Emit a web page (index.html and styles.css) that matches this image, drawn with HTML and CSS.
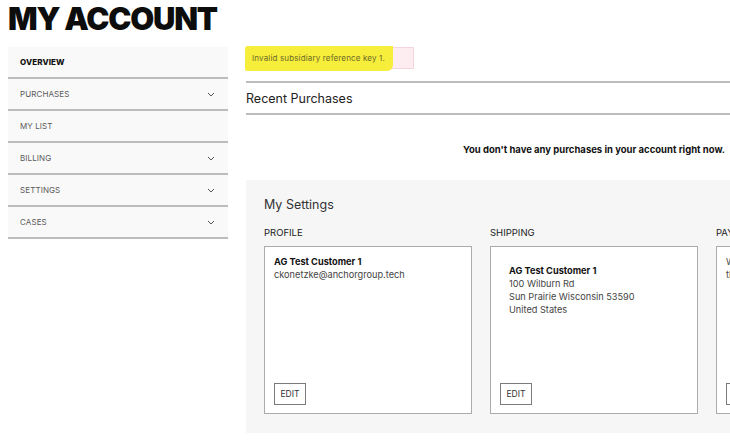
FILE: index.html
```html
<!DOCTYPE html>
<html lang="en">
<head>
    <meta charset="UTF-8">
    <meta name="viewport" content="width=device-width, initial-scale=1.0">
    <title>My Account</title>
    <link rel="stylesheet" href="styles.css">
</head>
<body>

<div class="account-page">
    <h1>My Account</h1>

    <div class="account-layout">
        <!-- Sidebar navigation -->
        <ul class="side-nav">
            <li class="nav-item active"><span>Overview</span></li>
            <li class="nav-item"><span>Purchases</span>
                <svg class="chevron" width="8" height="5" viewBox="0 0 8 5"><polyline points="1,1 4,4 7,1"/></svg>
            </li>
            <li class="nav-item"><span>My List</span></li>
            <li class="nav-item"><span>Billing</span>
                <svg class="chevron" width="8" height="5" viewBox="0 0 8 5"><polyline points="1,1 4,4 7,1"/></svg>
            </li>
            <li class="nav-item"><span>Settings</span>
                <svg class="chevron" width="8" height="5" viewBox="0 0 8 5"><polyline points="1,1 4,4 7,1"/></svg>
            </li>
            <li class="nav-item"><span>Cases</span>
                <svg class="chevron" width="8" height="5" viewBox="0 0 8 5"><polyline points="1,1 4,4 7,1"/></svg>
            </li>
        </ul>

        <div class="account-main">
            <div class="alert-error"><span class="marker">Invalid subsidiary reference key 1.</span></div>

            <div class="recent-purchases">
                <h2>Recent Purchases</h2>
            </div>
            <p class="empty-message">You don't have any purchases in your account right now.</p>

            <!-- Settings overview -->
            <div class="settings-panel">
                <h2>My Settings</h2>
                <div class="settings-grid">
                    <div class="settings-col">
                        <h3>Profile</h3>
                        <div class="settings-card">
                            <p><strong>AG Test Customer 1</strong></p>
                            <p>ckonetzke@anchorgroup.tech</p>
                            <button class="edit-btn">EDIT</button>
                        </div>
                    </div>
                    <div class="settings-col">
                        <h3>Shipping</h3>
                        <div class="settings-card address">
                            <p><strong>AG Test Customer 1</strong></p>
                            <p>100 Wilburn Rd</p>
                            <p>Sun Prairie Wisconsin 53590</p>
                            <p>United States</p>
                            <button class="edit-btn">EDIT</button>
                        </div>
                    </div>
                    <div class="settings-col">
                        <h3>Payment</h3>
                        <div class="settings-card">
                            <p>We don't have any credit cards on file for</p>
                            <p>this account.</p>
                            <button class="edit-btn">EDIT</button>
                        </div>
                    </div>
                </div>
            </div>
        </div>
    </div>
</div>

</body>
</html>
```

FILE: styles.css
```css
* {
    margin: 0;
    padding: 0;
    box-sizing: border-box;
}
body {
    font-family: 'Inter', 'Liberation Sans', sans-serif;
    background-color: #fff;
    color: #222;
    overflow: hidden;
    width: 730px;
    height: 440px;
}
.account-page {
    padding-left: 8px;
}
h1 {
    font-size: 31px;
    font-weight: 900;
    text-transform: uppercase;
    line-height: 36px;
    letter-spacing: -1.2px;
    color: #0d0d0d;
    padding-top: 1px;
    margin-bottom: 10px;
}
.account-layout {
    display: flex;
    gap: 18px;
    align-items: flex-start;
}

/* sidebar */
.side-nav {
    list-style: none;
    width: 220px;
    flex-shrink: 0;
}
.nav-item {
    display: flex;
    align-items: center;
    justify-content: space-between;
    height: 32px;
    padding: 0 13px 0 12px;
    background-color: #f9f9f9;
    border-bottom: 2px solid #bcbcbc;
    font-size: 8px;
    text-transform: uppercase;
    color: #5a5a5a;
    letter-spacing: 0.1px;
}
.nav-item.active {
    font-weight: 800;
    color: #111;
}
.chevron {
    fill: none;
    stroke: #555;
    stroke-width: 1;
}

/* main column */
.account-main {
    width: 696px;
    flex-shrink: 0;
}
.alert-error {
    width: 168px;
    height: 22px;
    background-color: #fdedf1;
    border: 1px solid #f5d6de;
    display: flex;
    align-items: center;
}
.marker {
    display: inline-block;
    background-color: #f6ee3a;
    font-size: 8px;
    letter-spacing: 0.15px;
    color: #6e6a2a;
    padding: 0 8px 0 7px;
    margin-left: -2px;
    line-height: 25px;
    border-radius: 3px 0 6px 2px;
}
.recent-purchases {
    margin-top: 12px;
    border-top: 2px solid #bdbdbd;
    border-bottom: 2px solid #bdbdbd;
    height: 34px;
    display: flex;
    align-items: center;
}
.recent-purchases h2 {
    font-size: 12.5px;
    font-weight: 400;
    color: #222;
}
.empty-message {
    text-align: center;
    font-size: 9.5px;
    font-weight: 700;
    color: #111;
    margin-top: 29px;
    margin-bottom: 25px;
}
.settings-panel {
    background-color: #f6f6f6;
    padding: 17px 18px 19px;
}
.settings-panel h2 {
    font-size: 12.5px;
    font-weight: 400;
    color: #333;
    margin-bottom: 15px;
}
.settings-grid {
    display: grid;
    grid-template-columns: 208px 208px 208px;
    gap: 18px;
}
.settings-col h3 {
    font-size: 9.5px;
    font-weight: 400;
    text-transform: uppercase;
    color: #222;
    margin-bottom: 8px;
}
.settings-card {
    display: flex;
    flex-direction: column;
    height: 168px;
    background-color: #fff;
    border: 1px solid #ababab;
    padding: 8px 9px 8px;
    font-size: 9.2px;
    color: #444;
    line-height: 13px;
}
.settings-card strong {
    color: #111;
    font-weight: 700;
}
.settings-card.address {
    padding: 17px 9px 8px 18px;
}
.edit-btn {
    margin-top: auto;
    align-self: flex-start;
    font-family: inherit;
    font-size: 8.5px;
    color: #333;
    background-color: #fff;
    border: 1px solid #7a7a7a;
    width: 32px;
    height: 22px;
}
.settings-card.address .edit-btn {
    margin-left: -9px;
}
```
